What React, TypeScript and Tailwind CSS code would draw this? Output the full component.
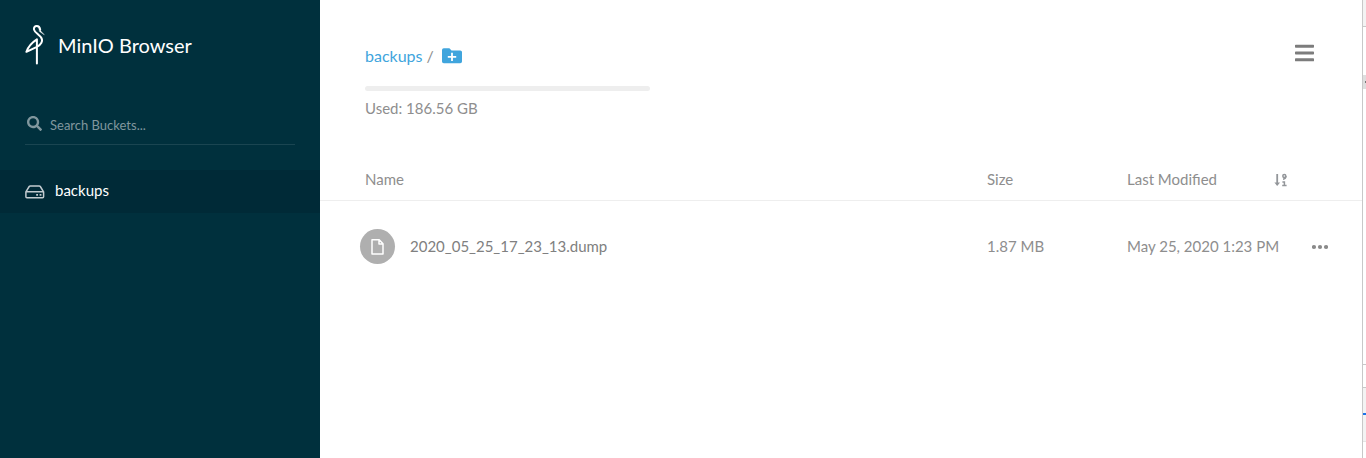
import React from "react";
import { FaSearch, FaBars } from "react-icons/fa";

function StorkLogo() {
  return (
    <svg className="h-10 w-5" viewBox="0 0 20 40" fill="none" stroke="#fff" strokeLinecap="round" strokeLinejoin="round">
      <path d="M15.2 4.6C14.8 2.4 13.6 1.1 11.8 1.1C9.6 1.1 8.6 2.8 9 4.6C9.5 6.8 12 8.4 14 10.2C17 12.7 17.8 15.2 16.4 17.8C15.3 19.9 13.5 21 11.9 21.8L1.4 26.8C3 22.5 7 17.5 11.9 14.4V38.4" strokeWidth="2" />
      <path d="M14.2 3 16 6.3 19.3 9.8 14.6 6.6Z" fill="#fff" strokeWidth=".4" />
    </svg>
  );
}

function DriveIcon() {
  return (
    <svg className="h-[14px] w-5" viewBox="0 0 20 14" fill="none" stroke="#c2cbd0" strokeWidth="1.5" strokeLinejoin="round">
      <path d="M.9 6.8 4.2 1.5Q4.6.9 5.3.9H14.2Q14.9.9 15.3 1.5L18.6 6.8V11.8Q18.6 12.8 17.6 12.8H1.9Q.9 12.8.9 11.8ZM1 6.8H18.5" />
      <path d="M11.2 9.8h1.8M14.6 9.8h1.8" strokeWidth="1.7" />
    </svg>
  );
}

function FolderPlus() {
  return (
    <svg className="h-4 w-5" viewBox="0 0 20 16">
      <path fill="#40a5dd" d="M1.8.2H7.4L9.5 2.4H18.2Q20 2.4 20 4.1V13.4Q20 15.2 18.2 15.2H1.8Q0 15.2 0 13.4V2Q0 .2 1.8.2Z" />
      <path stroke="#fff" strokeWidth="1.8" d="M10 4.7V13.1M5.8 8.9H14.2" />
    </svg>
  );
}

function FileIcon() {
  return (
    <svg className="h-4 w-[13px]" viewBox="0 0 13 16" fill="none" stroke="#fff" strokeWidth="1.5" strokeLinejoin="round">
      <path d="M1 .8H8.2L12 4.7V15.1H1ZM8 1V5H12" />
    </svg>
  );
}

function SortIcon() {
  return (
    <svg className="h-[14px] w-[14px]" viewBox="0 0 14 14" fill="none" stroke="#93969a">
      <path d="M3.2 1V11.5" strokeWidth="1.8" />
      <path d="M.4 9.6H6L3.2 13Z" fill="#93969a" stroke="none" />
      <circle cx="10.3" cy="2.9" r="1.5" strokeWidth="1.5" />
      <path d="M12 3C12 5 11.3 6 9 6.2M8.4 9H10.4V12.4M8.2 12.4H12.6" strokeWidth="1.5" />
    </svg>
  );
}

function MoreIcon() {
  return (
    <svg className="h-4 w-4" viewBox="0 0 16 16" fill="#8a8a8a">
      <circle cx="2" cy="8" r="2.1" />
      <circle cx="8" cy="8" r="2.1" />
      <circle cx="14" cy="8" r="2.1" />
    </svg>
  );
}

const columns = "grid grid-cols-[622px_140px_1fr]";

export default function App() {
  return (
    <div className="flex h-[458px] w-[1366px] overflow-hidden bg-white font-['Lato',sans-serif] text-[15px] leading-5 text-[#8e8e8e]">
      <aside className="flex w-[320px] shrink-0 flex-col bg-[#00303d]">
        <div className="flex h-[90px] items-center px-[25px]">
          <StorkLogo />
          <h1 className="ml-[13px] text-[20px] leading-6 text-white">MinIO Browser</h1>
        </div>
        <label className="mx-[25px] mt-[15px] flex h-10 items-center border-b border-[#1a4551] text-[13px] text-[#80979e]">
          <FaSearch className="mb-[3px] ml-[2px] h-[15px] w-[15px]" />
          <span className="ml-2">Search Buckets...</span>
        </label>
        <div className="mt-[25px] flex h-[43px] items-center bg-[#002a37] px-[25px] text-white">
          <DriveIcon />
          <span className="ml-[10px] pb-[3px]">backups</span>
        </div>
      </aside>

      <main className="flex w-[1042px] flex-col">
        <header className="flex h-[160px] justify-between pr-12 pl-[45px]">
          <div className="pt-[46px]">
            <div className="flex h-5 items-center text-[16px]">
              <span className="text-[#40a5dd]">backups</span>
              <span className="mr-2 ml-1">/</span>
              <FolderPlus />
            </div>
            <div className="mt-5 h-[5px] w-[285px] rounded-sm bg-[#eee]" />
            <div className="mt-[7px]">Used: 186.56 GB</div>
          </div>
          <FaBars className="mt-[42px] h-[22px] w-[19px] text-[#7c7c7c]" />
        </header>
        <div className={`${columns} h-[41px] items-center border-b border-[#eee] pl-[45px]`}>
          <span className="pb-[2px]">Name</span>
          <span className="pb-[2px]">Size</span>
          <div className="flex items-center">
            <span className="w-[147px] pb-[2px]">Last Modified</span>
            <SortIcon />
          </div>
        </div>
        <div className={`${columns} h-[91px] items-center pl-[45px]`}>
          <div className="-ml-[5px] flex items-center">
            <span className="mr-[15px] flex h-[35px] w-[35px] items-center justify-center rounded-full bg-[#afafaf]">
              <FileIcon />
            </span>
            <span className="pb-[2px] text-[#808080]">2020_05_25_17_23_13.dump</span>
          </div>
          <span className="pb-[2px]">1.87 MB</span>
          <div className="flex items-center">
            <span className="w-[185px] pb-[2px]">May 25, 2020 1:23 PM</span>
            <MoreIcon />
          </div>
        </div>
      </main>

      <div className="flex w-1 flex-col border-l border-[#c8c8c8]">
        <div className="h-[27px] border-b border-[#c8c8c8] bg-[#f3f3f3]" />
        <div className="h-12" />
        <div className="flex h-[14px] items-center justify-end bg-[#dedede]">
          <div className="h-[2px] w-px bg-[#777]" />
        </div>
        <div className="h-[276px] border-b border-[#c8c8c8]" />
        <div className="h-[23px] border-b border-[#c8c8c8]" />
        <div className="h-[25px] bg-[#f3f3f3]" />
        <div className="h-[2px] bg-[#1a73e8]" />
        <div className="h-[27px] border-b border-[#e5e5e5] bg-[#f3f3f3]" />
      </div>
    </div>
  );
}
